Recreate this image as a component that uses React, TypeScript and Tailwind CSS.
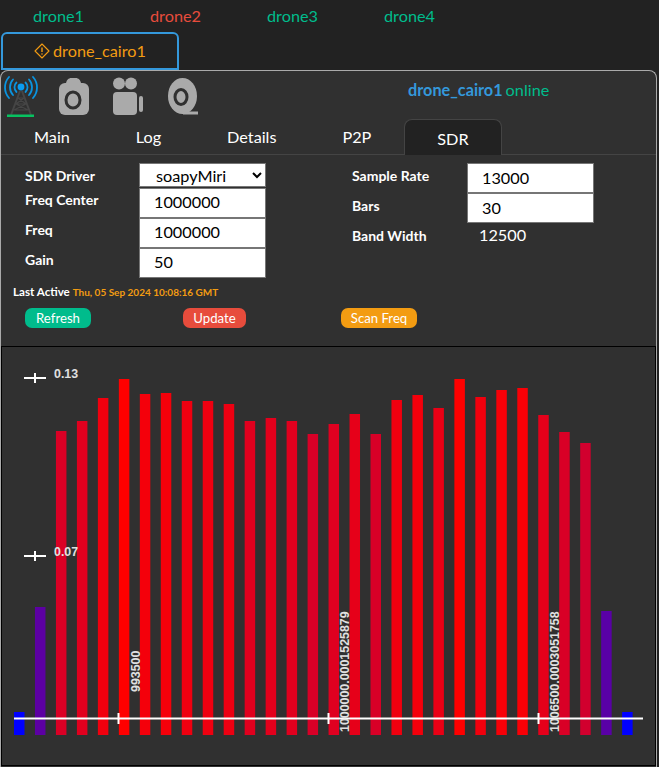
const tops = [712,607,431,421,398,379,394,393,401,401,404,421,418,421,434,424,414,434,400,395,408,379,397,390,388,415,432,443,611,712];
const base = 735;
function barColor(top: number) {
  const t = Math.min(1, Math.max(0, (base - top) / 356));
  const adj = top > 700 ? 0 : t;
  return `rgb(${Math.round(255 * adj)},0,${Math.round(255 * (1 - adj))})`;
}

function DiamondIcon() {
  return (
    <svg width="16" height="16" viewBox="0 0 16 16" fill="none" stroke="#f39c12" strokeWidth="1.1">
      <path d="M8 1 15 8 8 15 1 8Z" strokeLinejoin="round" />
      <path d="M8 4.500V9" strokeWidth="1.4" />
      <circle cx="8" cy="11" r="0.8" fill="#f39c12" stroke="none" />
    </svg>
  );
}

function TowerIcon() {
  return (
    <svg width="34" height="42" viewBox="4 76 34 42" fill="none" className="shrink-0">
      <g stroke="#0a94e0" strokeWidth="1.8" strokeLinecap="round">
        <path d="M16.500 82.500a6.600 6.600 0 0 0 0 9.500" />
        <path d="M25.500 82.500a6.600 6.600 0 0 1 0 9.500" />
        <path d="M13 79.500a11.500 11.500 0 0 0 0 15.500" />
        <path d="M29 79.500a11.500 11.500 0 0 1 0 15.500" />
        <path d="M9 77a15.800 15.800 0 0 0 0 21" />
        <path d="M33 77a15.800 15.800 0 0 1 0 21" />
      </g>
      <circle cx="21" cy="87" r="3.4" fill="#0a9cf0" />
      <g stroke="#464646" strokeWidth="2">
        <path d="M20 91 11 115M22 91 31 115" />
        <path d="M18 98H24M16 104H26M14 110H28M18 98 26 104 14 110M24 98 16 104 28 110" strokeWidth="1.2" />
      </g>
      <rect x="7" y="114.500" width="27" height="2.500" fill="#07c160" />
    </svg>
  );
}

function CameraIcon() {
  return (
    <svg width="32" height="40" viewBox="58 77 32 40" className="shrink-0">
      <path d="M66 85c0-4 3-6 5-6h5c2 0 5 2 5 6Z" fill="#aaa" />
      <rect x="59" y="84" width="30" height="32" rx="6" fill="#aaa" />
      <ellipse cx="73" cy="101" rx="7" ry="8" fill="none" stroke="#303030" strokeWidth="3" />
    </svg>
  );
}

function VideoIcon() {
  return (
    <svg width="32" height="40" viewBox="112 77 32 40" className="shrink-0">
      <circle cx="119" cy="84.500" r="6" fill="#aaa" />
      <circle cx="131" cy="84.500" r="6" fill="#aaa" />
      <rect x="113" y="93" width="24" height="23" rx="4" fill="#aaa" />
      <rect x="139" y="97" width="4" height="16" rx="2" fill="#aaa" />
    </svg>
  );
}

function TapeIcon() {
  return (
    <svg width="32" height="40" viewBox="167 77 32 40" className="shrink-0">
      <ellipse cx="182.500" cy="97" rx="14.500" ry="18" fill="#aaa" />
      <rect x="183" y="112.500" width="15" height="3" fill="#aaa" />
      <ellipse cx="181" cy="98" rx="6" ry="7.500" fill="none" stroke="#303030" strokeWidth="3" />
    </svg>
  );
}

function Chart() {
  const w = 20.97;
  return (
    <svg width="653" height="418" viewBox="2 347 653 418" className="block">
      {tops.map((t, i) => (
        <rect key={i} x={14 + i * w} y={t} width="10.500" height={base - t} fill={barColor(t)} />
      ))}
      <g stroke="#fff" strokeWidth="2" fill="none">
        <path d="M24 378H46M35 373V383" />
        <path d="M24 556H46M35 551V561" />
        <path d="M14 718.500H643" />
        <path d="M118.500 713V724M328.500 713V724M538.500 713V724" />
      </g>
      <g fontFamily="'Liberation Sans', Arial, sans-serif" fontSize="12.400" fontWeight="700" fill="#e0e0e0">
        <text x="54" y="378">0.13</text>
        <text x="54" y="556">0.07</text>
        <text transform="translate(140 692) rotate(-90)">993500</text>
        <text transform="translate(349 732) rotate(-90)">1000000.0001525879</text>
        <text transform="translate(559 732) rotate(-90)">1006500.0003051758</text>
      </g>
    </svg>
  );
}

function Field({ value }: { value: string }) {
  return (
    <input
      readOnly
      value={value}
      className="w-[127px] h-[30px] bg-white border-[1.500px] border-[#767676] border-solid pl-[14px] pb-[2px] text-[16.250px] text-black outline-none [font-family:Lato,sans-serif]"
    />
  );
}

function Row({ label, children, h = "h-[30px]", offset = "pt-[3px]", w = "w-[114px]" }: { label: string; children?: React.ReactNode; h?: string; offset?: string; w?: string }) {
  return (
    <div className={`flex ${h}`}>
      <div className={`${w} shrink-0 text-[14px] font-bold text-white leading-[18px] ${offset}`}>{label}</div>
      {children}
    </div>
  );
}

export default function App() {
  return (
    <div className="w-[659px] h-[767px] overflow-hidden bg-[#222222] text-white text-[16.250px] [font-family:Lato,'Noto_Sans',sans-serif]">
      <nav className="flex h-[32px]">
        {[
          ["drone1", "text-[#00bc8c]"],
          ["drone2", "text-[#e74c3c]"],
          ["drone3", "text-[#00bc8c]"],
          ["drone4", "text-[#00bc8c]"],
        ].map(([n, c]) => (
          <span key={n} className={`w-[117px] pl-[33px] pt-[4px] leading-[24px] ${c}`}>{n}</span>
        ))}
      </nav>
      <div className="ml-px w-[178px] h-[38px] border-2 border-[#3498db] rounded-t-[6px] flex items-center pl-[31px] gap-[3px] text-[#f39c12]">
        <DiamondIcon />
        <span>drone_cairo1</span>
      </div>
      <section className="w-[657px] h-[697px] bg-[#303030] border border-[#aaaaaa] border-b-0 rounded-t-[8px] flex flex-col">
        <div className="relative h-[48px] shrink-0 flex items-start pt-[5px] pl-[3px]">
          <TowerIcon />
          <span className="ml-[20px]"><CameraIcon /></span>
          <span className="ml-[22px]"><VideoIcon /></span>
          <span className="ml-[23px]"><TapeIcon /></span>
          <div className="absolute left-[407px] top-[8px] leading-[22px]">
            <span className="font-bold text-[#3498db]">drone_cairo1</span>
            <span className="ml-[3px] text-[#00bc8c]">online</span>
          </div>
        </div>
        <div className="h-[36px] shrink-0 flex items-end border-b border-[#444444] pl-px">
          {["Main", "Log", "Details", "P2P"].map((t) => (
            <span key={t} className="h-[35px] px-[32px] mr-[1.900px] leading-[36px]">{t}</span>
          ))}
          <span className="h-[36px] -mb-px -ml-[1px] px-[32px] leading-[37px] bg-[#222222] border border-[#444444] border-b-0 rounded-t-[8px]">SDR</span>
        </div>
        <div className="h-[127px] shrink-0 pl-[24px] pt-[8px] flex">
          <div className="w-[327px]">
            <Row label="SDR Driver" h="h-[24.500px]" offset="pt-[4px]">
              <select defaultValue="soapyMiri" className="w-[127px] h-[24px] bg-white text-black text-[16.250px] pl-[12px] border-[1.500px] border-[#767676] outline-none [font-family:Lato,sans-serif]">
                <option>soapyMiri</option>
              </select>
            </Row>
            <Row label="Freq Center"><Field value="1000000" /></Row>
            <Row label="Freq"><Field value="1000000" /></Row>
            <Row label="Gain"><Field value="50" /></Row>
          </div>
          <div>
            <Row label="Sample Rate" w="w-[115px]" offset="pt-[4px]"><Field value="13000" /></Row>
            <Row label="Bars" w="w-[115px]" offset="pt-[4px]"><Field value="30" /></Row>
            <Row label="Band Width" w="w-[115px]" offset="pt-[4px]">
              <div className="pl-[12px] pt-[2px] leading-[20px]">12500</div>
            </Row>
          </div>
        </div>
        <div className="h-[20px] shrink-0 pl-[12px] -mt-[2px] leading-[20px] font-bold">
          <span className="text-[11.600px]">Last Active </span>
          <span className="text-[10px] text-[#f39c12]">Thu, 05 Sep 2024 10:08:16 GMT</span>
        </div>
        <div className="h-[20px] mt-[8px] shrink-0 relative flex text-[13.200px] leading-[20px]">
          <span className="ml-[24px] w-[66px] h-[20px] rounded-[7px] bg-[#00bc8c] text-center">Refresh</span>
          <span className="ml-[92px] w-[63px] h-[20px] rounded-[7px] bg-[#e74c3c] text-center">Update</span>
          <span className="ml-[95px] w-[76px] h-[20px] rounded-[7px] bg-[#f39c12] text-center">Scan Freq</span>
        </div>
        <div className="mt-[18px] w-[655px] h-[420px] border border-black">
          <Chart />
        </div>
      </section>
    </div>
  );
}
